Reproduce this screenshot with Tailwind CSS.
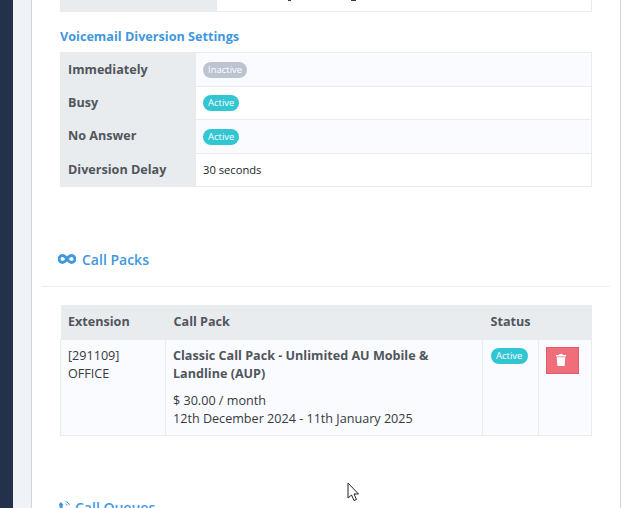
<!DOCTYPE html>
<html lang="en">
<head>
    <meta charset="UTF-8">
    <title>Voicemail and Call Packs</title>
    <script src="https://cdn.jsdelivr.net/npm/@tailwindcss/browser@4"></script>
</head>
<body class="h-[508px] overflow-hidden bg-white font-['Open_Sans',sans-serif] text-[12.6px] text-[#343a40]">
<div class="flex h-[508px]">
    <!-- Sidebar edge -->
    <div class="w-[13px] shrink-0 bg-[#23314b]"></div>
    <div class="w-[18px] shrink-0 bg-[#eff3f8]"></div>

    <!-- Main panel -->
    <main class="w-[590px] shrink-0 overflow-hidden border-x border-[#d2d4d8] bg-white">
        <div class="px-[28px]">
            <!-- Previous table, cut off by the window -->
            <div class="flex h-[12px] border-b border-r border-[#e9ecef]">
                <div class="w-[157px] bg-[#e9ecef]"></div>
                <div class="flex flex-1 items-start pl-[71px]">
                    <span class="h-[1px] w-[3px] bg-[#343a40]"></span>
                    <span class="ml-[60px] h-[1px] w-[5px] bg-[#343a40]"></span>
                </div>
            </div>

            <h3 class="mt-[15px] h-[18px] text-[12.650px] leading-[18px] font-bold text-[#3f97e0]">Voicemail Diversion Settings</h3>

            <div class="mt-[7px] border-t border-r border-b border-[#e9ecef]">
                <div class="flex h-[34px] border-b border-[#e9ecef]">
                    <div class="flex w-[136px] items-center bg-[#e9ecef] pt-[1px] pl-[8px] font-bold text-[#50565c]">Immediately</div>
                    <div class="flex flex-1 items-center bg-[#fafbfe] pl-[7px]"><span class="rounded-full bg-[#bcc3d1] px-[5px] text-[9.500px] leading-[16px] text-white">Inactive</span></div>
                </div>
                <div class="flex h-[33px] border-b border-[#e9ecef]">
                    <div class="flex w-[136px] items-center bg-[#e9ecef] pl-[8px] font-bold text-[#50565c]">Busy</div>
                    <div class="flex flex-1 items-center pl-[7px]"><span class="rounded-full bg-[#32c5d2] px-[5px] text-[9.500px] leading-[16px] text-white">Active</span></div>
                </div>
                <div class="flex h-[34px] border-b border-[#e9ecef]">
                    <div class="flex w-[136px] items-center bg-[#e9ecef] pl-[8px] font-bold text-[#50565c]">No Answer</div>
                    <div class="flex flex-1 items-center bg-[#fafbfe] pl-[7px]"><span class="rounded-full bg-[#32c5d2] px-[5px] text-[9.500px] leading-[16px] text-white">Active</span></div>
                </div>
                <div class="flex h-[32px]">
                    <div class="flex w-[136px] items-center bg-[#e9ecef] pl-[8px] font-bold text-[#50565c]">Diversion Delay</div>
                    <div class="flex flex-1 items-center pl-[7px] text-[11.200px] text-[#212529]">30 seconds</div>
                </div>
            </div>
        </div>

        <!-- Call Packs -->
        <div class="mt-[62px] flex h-[20px] items-center gap-[6px] pl-[26px] text-[14px] font-semibold text-[#3f97e0]">
            <svg class="h-[10px] w-[18px]" viewBox="0 0 18 10" fill="none" stroke="#3f97e0" stroke-width="2.800"><path d="M9 5C7.500 2.800 6.200 1.500 4.600 1.500a3.500 3.500 0 0 0 0 7C6.200 8.500 7.500 7.200 9 5c1.500-2.200 2.800-3.500 4.400-3.500a3.500 3.500 0 0 1 0 7C11.800 8.500 10.500 7.200 9 5z"/></svg>
            <span>Call Packs</span>
        </div>
        <div class="mx-[10px] mt-[17px] border-t border-[#eceef1]"></div>

        <div class="mt-[18px] px-[28px]">
            <table class="w-full table-fixed border-collapse leading-[18px]">
                <thead>
                    <tr class="h-[34px] bg-[#e9ecef] text-left font-bold text-[#50565c]">
                        <th class="w-[105px] pl-[7.500px]">Extension</th>
                        <th class="w-[317px] pl-[8px]">Call Pack</th>
                        <th class="w-[56px] pl-[8px]">Status</th>
                        <th></th>
                    </tr>
                </thead>
                <tbody>
                    <tr class="bg-[#fafbfe] align-top">
                        <td class="border border-[#e9ecef] px-[7px] pt-[7px] pb-[7px]">[291109]<br>OFFICE</td>
                        <td class="border border-[#e9ecef] px-[7px] pt-[7px] pb-[7px]">
                            <p class="font-bold text-[#50565c]">Classic Call Pack - Unlimited AU Mobile &amp; Landline (AUP)</p>
                            <p class="mt-[9px]">$ 30.00 / month<br>12th December 2024 - 11th January 2025</p>
                        </td>
                        <td class="border border-[#e9ecef] pl-[8px] pt-[8px]"><span class="block w-[37px] rounded-full bg-[#32c5d2] px-[5px] text-[9.500px] leading-[16px] text-white">Active</span></td>
                        <td class="border border-[#e9ecef] pl-[7px] pt-[7px]">
                            <button class="flex h-[27px] w-[33px] items-center justify-center border border-[#e25b6a] bg-[#f06d7a] pr-[3px] pb-[1px]">
                                <svg class="h-[12px] w-[10px]" viewBox="0 0 10 12" fill="#fff"><path d="M3.500 0h3l.5 1h3v1.500H0V1h3zM.7 3.300h8.600L8.600 12H1.400z"/></svg>
                            </button>
                        </td>
                    </tr>
                </tbody>
            </table>
        </div>

        <!-- Call Queues, cut off by the window -->
        <div class="mt-[62px] flex h-[20px] items-center gap-[4px] pl-[26px] text-[14px] font-semibold text-[#3f97e0]">
            <svg class="h-[14px] w-[13px]" viewBox="0 0 13 14" fill="#3f97e0"><path d="M3 1 1 3c.3 3.500 2 7 6 9l2-2-2-2-1 1C5 8 4.500 6.500 4.300 5L5.500 4z"/><path d="M7.500 0.500c2 .3 3.500 1.800 3.800 3.800M7.500 3c1 .2 1.500.8 1.600 1.600" fill="none" stroke="#3f97e0"/></svg>
            <span>Call Queues</span>
        </div>
    </main>

    <div class="flex-1 bg-white"></div>
</div>

<!-- Mouse pointer from the capture -->
<svg class="absolute left-[347px] top-[482px] h-[20px] w-[14px]" viewBox="0 0 14 20" fill="#fff" stroke="#222" stroke-width="1"><path d="M1 1v15l3.500-3 2.500 5.500 2.500-1-2.500-5.500h4.500z"/></svg>
</body>
</html>
